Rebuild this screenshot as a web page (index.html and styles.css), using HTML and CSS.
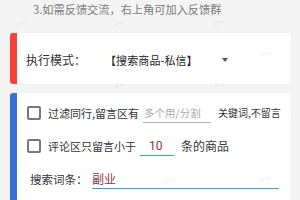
FILE: index.html
```html
<!DOCTYPE html>
<html lang="zh">
<head>
<meta charset="utf-8">
<link rel="stylesheet" href="styles.css">
</head>
<body>
<p class="tip">3.如需反馈交流，右上角可加入反馈群</p>
<section class="card card-red">
  <span class="label">执行模式：</span>
  <span class="select">【搜索商品-私信】</span>
  <span class="caret"></span>
</section>
<section class="card card-blue">
  <div class="row">
    <span class="check"></span>
    <span class="label">过滤同行,留言区有</span>
    <span class="field field-gray placeholder">多个用/分割</span>
    <span class="label small">关键词,不留言</span>
  </div>
  <div class="row">
    <span class="check"></span>
    <span class="label">评论区只留言小于</span>
    <span class="field field-blue num">10</span>
    <span class="label large">条的商品</span>
  </div>
  <div class="row row-plain">
    <span class="label">搜索词条：</span>
    <span class="field field-blue wide value">副业</span>
  </div>
</section>
<div class="wm">
  <span class="mark m1">薪特</span>
  <span class="mark m2">薪特</span>
  <span class="mark m3">薪特</span>
  <span class="mark m4">薪特</span>
  <span class="mark m5">薪特</span>
  <span class="mark m6">薪特</span>
  <span class="mark m7">薪特</span>
  <span class="mark m8">薪特</span>
  <span class="mark m9">薪特</span>
</div>
</body>
</html>
```
FILE: styles.css
```css
html, body {
  margin: 0;
  padding: 0;
}
body {
  width: 300px;
  height: 200px;
  overflow: hidden;
  background: #f4f4f4;
  font-family: "Noto Sans CJK SC", "Noto Sans", sans-serif;
  font-size: 11px;
  color: #333;
  position: relative;
}
.tip {
  margin: 0;
  padding: 1px 0 0 33px;
  height: 16px;
  line-height: 16px;
  font-size: 11.2px;
  color: #7a7a7a;
}
.card {
  background: #fff;
  margin: 0 9px 0 10px;
  border-radius: 3px 2px 2px 3px;
  box-shadow: 0 0 2px rgba(0,0,0,0.06);
}
.card-red {
  margin-top: 16px;
  height: 51px;
  border-left: 7px solid #f44336;
  display: flex;
  align-items: center;
  padding: 2px 0 0 9px;
  box-sizing: border-box;
}
.card-red .label {
  font-size: 12px;
  color: #333;
  width: 79px;
  flex: none;
}
.select {
  font-size: 11px;
  color: #222;
  letter-spacing: 0.1px;
}
.caret {
  width: 0;
  height: 0;
  border-left: 3.5px solid transparent;
  border-right: 3.5px solid transparent;
  border-top: 4px solid #555;
  margin-left: 24px;
  margin-top: 1px;
}
.card-blue {
  margin-top: 9px;
  height: 120px;
  border-left: 7px solid #3a6ed8;
  padding: 3px 0 0 10px;
  box-sizing: border-box;
}
.row {
  display: flex;
  align-items: center;
  height: 33px;
}
.check {
  width: 10px;
  height: 10px;
  border: 2px solid #777;
  border-radius: 2px;
  margin-right: 7px;
  flex: none;
}
.label {
  white-space: nowrap;
}
.small {
  font-size: 10px;
}
.large {
  font-size: 12px;
}
.field {
  height: 20px;
  line-height: 20px;
  box-sizing: border-box;
  white-space: nowrap;
  flex: none;
}
.field-gray {
  width: 68px;
  margin: 0 7px 0 4px;
  border-bottom: 1.5px solid #b0b0b0;
  color: #aaa;
  font-size: 10.5px;
  padding-left: 1px;
}
.field-blue {
  border-bottom: 1.5px solid #2ea6e6;
}
.num {
  width: 34px;
  margin: 0 7px 0 4px;
  padding-left: 9px;
  color: #8b3344;
  font-size: 12px;
  font-family: "Roboto", "Noto Sans", sans-serif;
}
.row-plain {
  padding-left: 3px;
}
.row-plain .label {
  width: 62px;
  font-size: 11.5px;
}
.wide {
  width: 187px;
}
.value {
  color: #8b3a4a;
  font-size: 12px;
}
.wm {
  position: absolute;
  inset: 0;
  pointer-events: none;
}
.mark {
  position: absolute;
  font-size: 5px;
  color: rgba(0,0,0,0.09);
  transform: rotate(-15deg);
}
.m1 { left: 16px; top: 20px; }
.m2 { left: 114px; top: 20px; }
.m3 { left: 214px; top: 19px; }
.m4 { left: 261px; top: 50px; }
.m5 { left: 14px; top: 80px; }
.m6 { left: 114px; top: 82px; }
.m7 { left: 214px; top: 81px; }
.m8 { left: 163px; top: 177px; }
.m9 { left: 260px; top: 175px; }
```
